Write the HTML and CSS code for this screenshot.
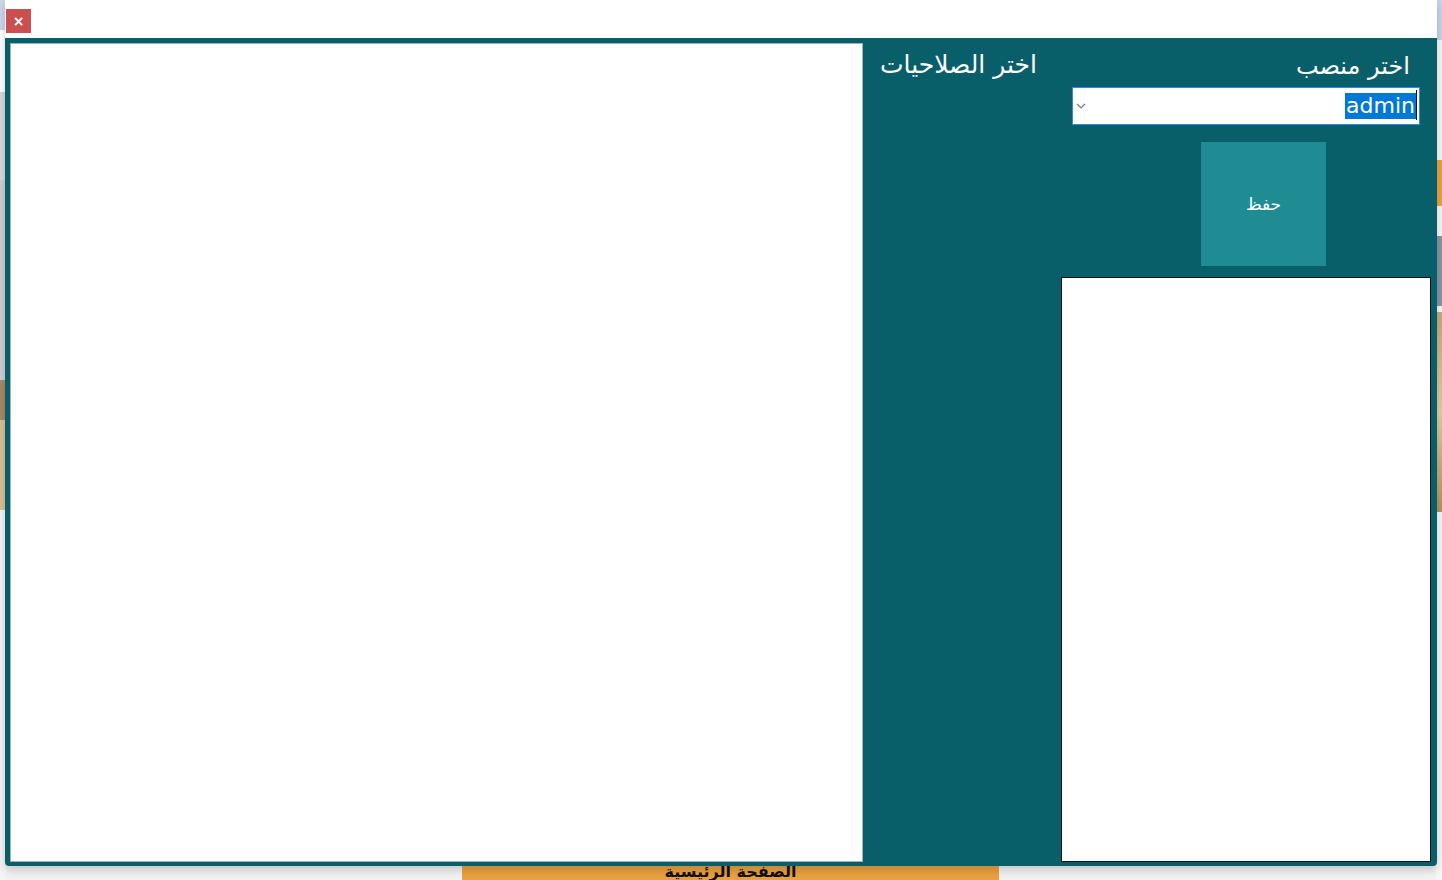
FILE: index.html
```html
<!DOCTYPE html>
<html lang="ar">
<head>
<meta charset="utf-8">
<title>الصلاحيات</title>
<link rel="stylesheet" href="styles.css">
</head>
<body>
<div class="page">
  <div class="page-top"></div>
  <div class="page-strip-left"></div>
  <div class="page-strip-right">
    <div class="rs rs-a"></div>
    <div class="rs rs-b"></div>
    <div class="rs rs-c"></div>
    <div class="rs rs-d"></div>
  </div>
  <div class="home-btn">الصفحة الرئيسية</div>
</div>

<div class="dialog">
  <div class="titlebar">
    <button class="close">×</button>
  </div>
  <div class="content">
    <div class="perm-panel"></div>
    <div class="mid-col">
      <div class="label label-perm">اختر الصلاحيات</div>
    </div>
    <div class="right-col">
      <div class="label label-role">اختر منصب</div>
      <div class="select">
        <svg class="chev" width="10" height="6" viewBox="0 0 10 6"><path d="M1 1 L5 5 L9 1" fill="none" stroke="#777" stroke-width="1.2"/></svg>
        <span class="sel-text">admin</span><span class="caret"></span>
      </div>
      <div class="btn-row"><button class="save">حفظ</button></div>
      <div class="listbox"></div>
    </div>
  </div>
</div>
</body>
</html>
```

FILE: styles.css
```css
html, body {
  margin: 0;
  padding: 0;
}
body {
  width: 1442px;
  height: 880px;
  overflow: hidden;
  background: #f2f2f2;
  font-family: "DejaVu Sans", "Liberation Sans", sans-serif;
  position: relative;
}
.page {
  position: absolute;
  inset: 0;
}
.page-top {
  height: 92px;
  background: #ffffff;
  border-bottom: 1px solid #c9c9c9;
}
.page-strip-left {
  position: absolute;
  left: 0;
  top: 0;
  width: 6px;
  height: 880px;
  background: linear-gradient(#cfd6ea 0 30px, #ffffff 30px 92px, #d9d9d9 92px 180px, #cfcfcf 180px 380px, #a88a6a 380px 420px, #d8c09a 420px 510px, #f5f5f5 510px 880px);
}
.page-strip-right {
  position: absolute;
  right: 0;
  top: 0;
  width: 6px;
  height: 880px;
  background: #f7f7f7;
}
.rs { position: absolute; left: 0; width: 6px; }
.rs-a { top: 0; height: 40px; background: #c8d2ea; }
.rs-b { top: 160px; height: 46px; background: #e8a33d; }
.rs-c { top: 236px; height: 70px; background: #8a94a2; }
.rs-d { top: 312px; height: 200px; background: linear-gradient(#c8a878, #e0cfa0, #b8905a); }
.home-btn {
  position: absolute;
  left: 462px;
  top: 866px;
  width: 537px;
  height: 40px;
  background: #eaa140;
  color: #111;
  font-weight: bold;
  font-size: 16px;
  text-align: center;
  line-height: 12px;
  box-sizing: border-box;
}

.dialog {
  position: absolute;
  left: 5px;
  top: 0;
  width: 1432px;
  height: 866px;
  display: flex;
  flex-direction: column;
  box-shadow: 0 4px 10px rgba(0,0,0,0.18);
  border-radius: 0 0 4px 4px;
}
.titlebar {
  height: 38px;
  background: #ffffff;
  padding: 9px 0 0 1px;
  box-sizing: border-box;
}
.close {
  width: 25px;
  height: 24px;
  border: 0;
  padding: 0;
  background: #c9504f;
  color: #fff;
  font-size: 14px;
  font-weight: bold;
  line-height: 24px;
  font-family: "DejaVu Sans", sans-serif;
}
.content {
  flex: 1;
  background: #085e69;
  display: grid;
  grid-template-columns: 853px 198px 370px;
  padding: 5px 6px 4px 5px;
  border-radius: 0 0 4px 4px;
}
.perm-panel {
  background: #ffffff;
  border: 1px solid #9fb3b7;
}
.label {
  color: #ffffff;
  font-size: 24px;
  line-height: 32px;
  direction: rtl;
  text-align: right;
}
.label-perm {
  font-size: 25px;
  letter-spacing: 0.3px;
}
.mid-col {
  padding: 6px 24px 0 0;
}
.right-col {
  display: flex;
  flex-direction: column;
}
.label-role {
  padding: 7px 21px 0 0;
}
.select {
  margin: 5px 11px 0 11px;
  height: 38px;
  box-sizing: border-box;
  background: #ffffff;
  border: 1px solid #2e8ae6;
  display: flex;
  align-items: center;
  padding: 0 2px 0 3px;
}
.chev { flex: none; }
.sel-text {
  margin-left: auto;
  background: #0078d7;
  color: #ffffff;
  font-size: 22px;
  line-height: 26px;
  padding: 0 1px;
}
.caret {
  width: 1px;
  height: 30px;
  background: #111;
  align-self: flex-start;
  margin-top: 2px;
}
.btn-row {
  display: flex;
  padding: 17px 0 0 140px;
}
.save {
  width: 125px;
  height: 124px;
  border: 0;
  background: #1f8c94;
  color: #ffffff;
  font-family: "DejaVu Sans", sans-serif;
  font-size: 17px;
}
.listbox {
  margin-top: 11px;
  flex: 1;
  background: #ffffff;
  border: 1px solid #111;
}
```
